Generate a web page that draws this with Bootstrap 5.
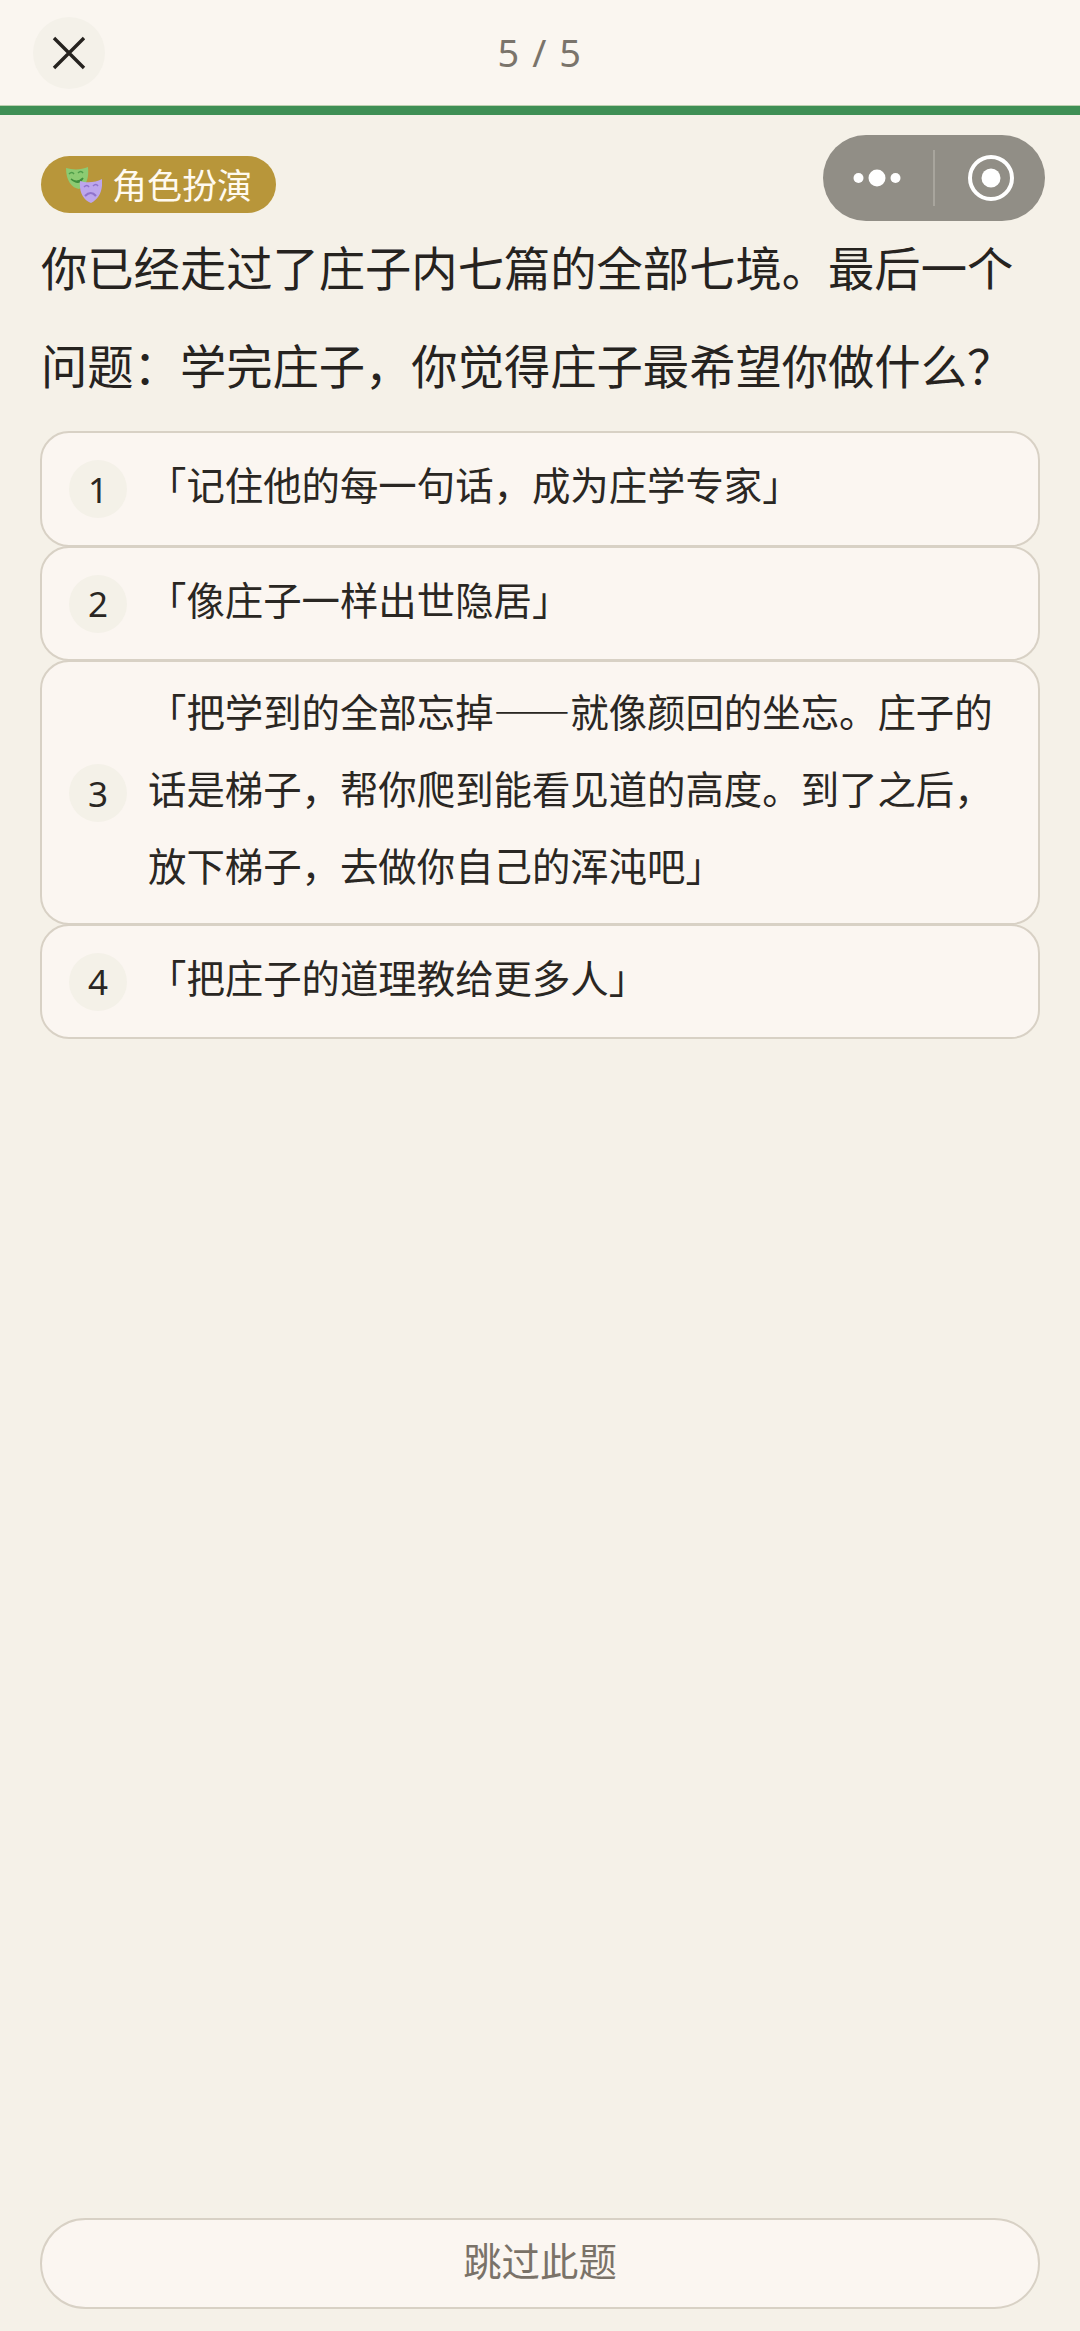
<!DOCTYPE html>
<html lang="zh-CN">
<head>
<meta charset="utf-8">
<title>5 / 5</title>
<link href="https://cdn.jsdelivr.net/npm/bootstrap@5.3.0/dist/css/bootstrap.min.css" rel="stylesheet">
<style>
html,body{height:2331px;}
body{background:#f5f1e8;color:#2a2723;font-family:"Noto Sans CJK SC","Noto Sans",sans-serif;overflow:hidden;}
.top-bar{height:105px;background:#faf6f0;padding-left:33px;}
.close-round{width:72px;height:72px;background:#f4f1e9;border:0;padding:0;}
.top-count{left:0;right:0;top:0;height:105px;font-family:"Noto Sans",sans-serif;font-size:38px;color:#7a746b;letter-spacing:1.5px;pointer-events:none;}
.progress-line{height:10px;--bs-progress-bg:#3f8f55;--bs-progress-bar-bg:#3f8f55;border-radius:0;border-top:1px solid #bcd0b0;}
.capsule-box{left:823px;top:135px;width:222px;height:86px;background:#918e86;}
.capsule-rule{width:2px;height:56px;background:#a8a59d;}
.dots-cell{width:110px;padding-left:30px;}
.ring-cell{width:110px;padding-left:2px;}
.main-area{padding:41px 40px 0;}
.role-tag{height:57px;width:235px;margin-left:1px;background:#b8963a;color:#fffaf0;font-size:35px;padding-left:25px;gap:10px;line-height:1;}
.role-word{padding-bottom:3px;}
.q-title{font-size:46.3px;line-height:98px;margin:4px 0 18px 1px;font-weight:400;color:#26231f;}
.choice-list{--bs-list-group-bg:#fbf6f1;--bs-list-group-border-color:#d8d1c5;--bs-list-group-border-width:2px;--bs-list-group-border-radius:29px;}
.choice-row{display:flex;align-items:center;border-radius:29px!important;border:2px solid #d8d1c5!important;background:#fbf6f1;padding:0 30px 0 27px;margin-top:-1px;font-size:38.4px;line-height:77px;color:#2a2723;min-height:115px;}
.choice-row:first-child{margin-top:0;min-height:116px;}
.num-round{flex:none;width:58px;height:58px;background:#f4f1e8;font-family:"Noto Sans",sans-serif;font-size:35px;font-weight:400;margin-right:21px;line-height:1;}
.choice-words{padding-bottom:11px;}
.choice-tall{padding-top:10px;padding-bottom:9px;}
.skip-wrap{padding:0 40px 22px;}
.skip-btn{height:91px;background:#fbf6f1;border:2px solid #d8d1c5;color:#7a7268;font-size:38.4px;padding-bottom:14px;--bs-btn-hover-bg:#fbf6f1;}
</style>
</head>
<body class="d-flex flex-column position-relative">
<header class="top-bar d-flex align-items-center position-relative">
  <button class="close-round rounded-circle d-flex align-items-center justify-content-center" type="button" aria-label="关闭">
    <svg width="36" height="36" viewBox="0 0 36 36"><path d="M3 3L33 33M33 3L3 33" stroke="#26231f" stroke-width="3.4" fill="none"/></svg>
  </button>
  <div class="top-count position-absolute d-flex align-items-center justify-content-center">5 / 5</div>
</header>
<div class="progress progress-line"><div class="progress-bar w-100"></div></div>

<div class="capsule-box position-absolute rounded-pill d-flex align-items-center">
  <div class="dots-cell d-flex align-items-center">
    <svg width="48" height="20" viewBox="0 0 48 20"><circle cx="5.500" cy="10" r="5" fill="#fff"/><circle cx="24" cy="10" r="8.500" fill="#fff"/><circle cx="42.500" cy="10" r="5" fill="#fff"/></svg>
  </div>
  <div class="capsule-rule"></div>
  <div class="ring-cell d-flex align-items-center justify-content-center">
    <svg width="48" height="48" viewBox="0 0 48 48"><circle cx="24" cy="24" r="21" fill="none" stroke="#fff" stroke-width="4"/><circle cx="24" cy="24" r="9.500" fill="#fff"/></svg>
  </div>
</div>

<main class="main-area flex-grow-1">
  <div class="role-tag rounded-pill d-inline-flex align-items-center">
    <svg width="36" height="36" viewBox="0 0 36 36">
      <path d="M0 1C7 3 15 3 22 0C23 11 21 18 13 22C6 21 0 14 0 1Z" fill="#8ccb72"/>
      <path d="M3 7q3-3 5 0M12 6q3-3 5 0" stroke="#4f9e4a" stroke-width="1.500" fill="none"/>
      <path d="M5 12q6 5 12-1q-4 8-12 1Z" fill="#3f8f3c" stroke="#3f8f3c" stroke-width="1.500"/>
      <path d="M14 14C20 16 29 16 36 12C37 24 33 32 25 36C17 33 13 25 14 14Z" fill="#bda6ec"/>
      <path d="M18 20q3-3 5 0M27 19q3-3 5 0" stroke="#8f73cc" stroke-width="1.500" fill="none"/>
      <path d="M19 29q6-6 11 0" stroke="#8f73cc" stroke-width="2.200" fill="none"/>
    </svg>
    <span class="role-word">角色扮演</span>
  </div>
  <h1 class="q-title">你已经走过了庄子内七篇的全部七境。最后一个问题：学完庄子，你觉得庄子最希望你做什么？</h1>
  <div class="choice-list list-group">
    <div class="choice-row list-group-item"><span class="num-round rounded-circle d-flex align-items-center justify-content-center">1</span><span class="choice-words">「记住他的每一句话，成为庄学专家」</span></div>
    <div class="choice-row list-group-item"><span class="num-round rounded-circle d-flex align-items-center justify-content-center">2</span><span class="choice-words">「像庄子一样出世隐居」</span></div>
    <div class="choice-row choice-tall list-group-item"><span class="num-round rounded-circle d-flex align-items-center justify-content-center">3</span><span class="choice-words">「把学到的全部忘掉——就像颜回的坐忘。庄子的话是梯子，帮你爬到能看见道的高度。到了之后，放下梯子，去做你自己的浑沌吧」</span></div>
    <div class="choice-row list-group-item"><span class="num-round rounded-circle d-flex align-items-center justify-content-center">4</span><span class="choice-words">「把庄子的道理教给更多人」</span></div>
  </div>
</main>

<footer class="skip-wrap">
  <button type="button" class="skip-btn btn rounded-pill w-100 d-flex align-items-center justify-content-center">跳过此题</button>
</footer>
<script src="https://cdn.jsdelivr.net/npm/bootstrap@5.3.0/dist/js/bootstrap.bundle.min.js"></script>
</body>
</html>
